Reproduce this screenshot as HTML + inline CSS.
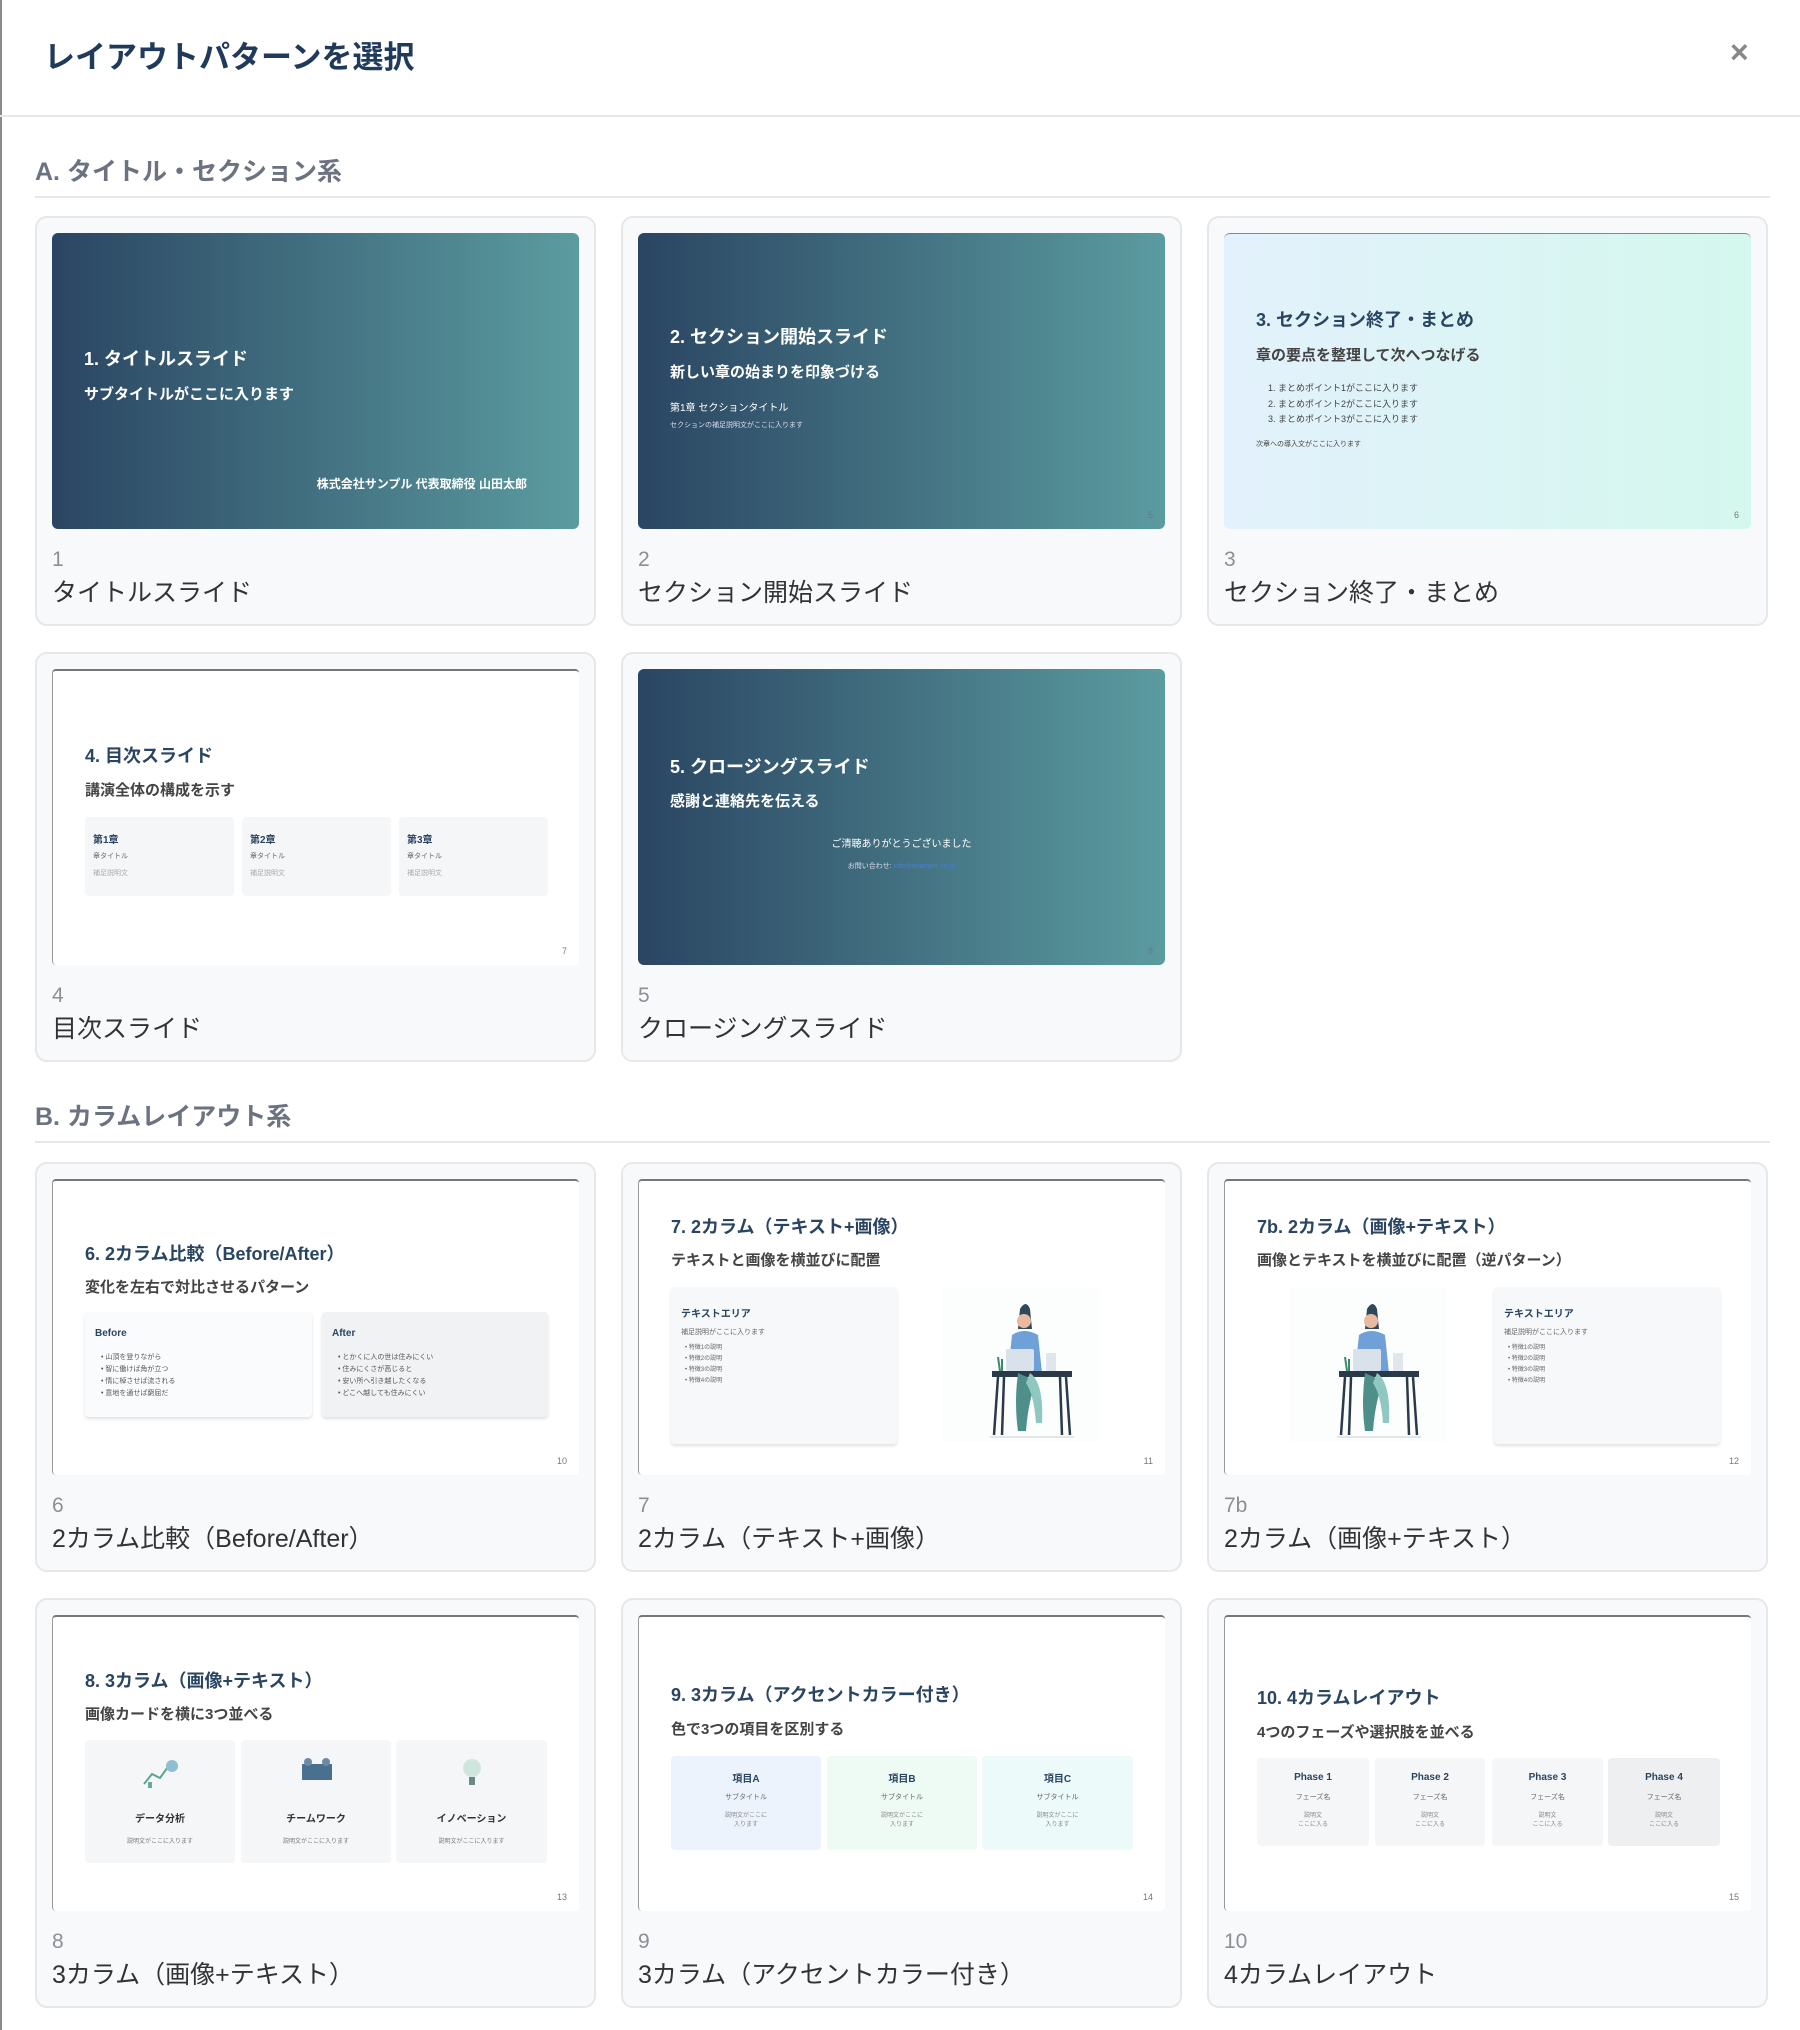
<!DOCTYPE html>
<html><head><meta charset="utf-8"><style>
*{box-sizing:border-box;margin:0;padding:0}
body{width:1800px;height:2030px;background:#fff;font-family:"Liberation Sans","Noto Sans CJK JP",sans-serif;position:relative;overflow:hidden}
.edge{position:absolute;left:0;top:0;width:2px;height:2030px;background:#8a8a8a}
.hdr{position:absolute;left:0;top:0;width:1800px;height:117px;border-bottom:2px solid #e5e7eb}
.hdr h1{position:absolute;left:44px;top:32px;font-size:31px;font-weight:700;color:#1f3a5a}
.x{position:absolute;left:1730px;top:34px;font-size:32px;color:#888;font-weight:700}
.sec{position:absolute;left:35px;width:1735px;font-size:25px;font-weight:700;color:#6b7280;border-bottom:2px solid #e5e7eb;height:46px}
.card{position:absolute;width:561px;height:410px;background:#f8f9fb;border:2px solid #e5e7eb;border-radius:12px}
.th{position:absolute;left:15px;top:15px;width:527px;height:296px;border-radius:6px;overflow:hidden;background:#fff}
.dark{background:linear-gradient(90deg,#2a4562,#5b9ca0)}
.white{border-top:2px solid #777;border-left:1px solid #999;border-radius:4px}
.num{position:absolute;left:15px;top:330px;font-size:21px;color:#8b8f96}
.nm{position:absolute;left:15px;top:355px;font-size:25px;color:#333}
.a{position:absolute;white-space:nowrap}
.t{font-weight:700;font-size:18px}
.s{font-weight:700;font-size:15px}
.pg{position:absolute;right:12px;bottom:9px;font-size:9px;color:#777}
.box{position:absolute;background:#f5f6f8;border-radius:4px}
.sh{box-shadow:0 2px 3px rgba(0,0,0,.12)}
.sm{font-size:7px;color:#666}
</style></head><body>
<div class="edge"></div>
<div class="hdr"><h1>レイアウトパターンを選択</h1><div class="x">×</div></div>

<div class="sec" style="top:152px">A. タイトル・セクション系</div>

<div class="card" style="left:35px;top:216px"><div class="th dark">
<div class="a t" style="left:32px;top:112px;color:#fff">1. タイトルスライド</div>
<div class="a s" style="left:32px;top:150px;color:#fff">サブタイトルがここに入ります</div>
<div class="a" style="right:52px;top:242px;color:#fff;font-size:12px;font-weight:700">株式会社サンプル 代表取締役 山田太郎</div>
</div><div class="num">1</div><div class="nm">タイトルスライド</div></div>

<div class="card" style="left:621px;top:216px"><div class="th dark">
<div class="a t" style="left:32px;top:90px;color:#fff">2. セクション開始スライド</div>
<div class="a s" style="left:32px;top:128px;color:#fff">新しい章の始まりを印象づける</div>
<div class="a" style="left:32px;top:166px;color:#fff;font-size:10px">第1章 セクションタイトル</div>
<div class="a" style="left:32px;top:187px;color:#dde;font-size:7px">セクションの補足説明文がここに入ります</div>
<div class="pg" style="color:#678">5</div>
</div><div class="num">2</div><div class="nm">セクション開始スライド</div></div>

<div class="card" style="left:1207px;top:216px"><div class="th" style="background:linear-gradient(90deg,#e3f1fc,#d4f7ee);border-top:1px solid #888">
<div class="a t" style="left:32px;top:72px;color:#2a4562">3. セクション終了・まとめ</div>
<div class="a s" style="left:32px;top:110px;color:#444">章の要点を整理して次へつなげる</div>
<div class="a" style="left:44px;top:147px;color:#444;font-size:9px;line-height:15.5px">1. まとめポイント1がここに入ります<br>2. まとめポイント2がここに入ります<br>3. まとめポイント3がここに入ります</div>
<div class="a sm" style="left:32px;top:205px;color:#444">次章への導入文がここに入ります</div>
<div class="pg">6</div>
</div><div class="num">3</div><div class="nm">セクション終了・まとめ</div></div>

<div class="card" style="left:35px;top:652px"><div class="th white">
<div class="a t" style="left:32px;top:71px;color:#2a4562">4. 目次スライド</div>
<div class="a s" style="left:32px;top:108px;color:#444">講演全体の構成を示す</div>
<div class="box" style="left:32px;top:146px;width:149px;height:79px"><div class="a" style="left:8px;top:14px;font-size:10px;font-weight:700;color:#2a4562">第1章</div><div class="a sm" style="left:8px;top:34px">章タイトル</div><div class="a sm" style="left:8px;top:51px;color:#aaa">補足説明文</div></div>
<div class="box" style="left:189px;top:146px;width:149px;height:79px"><div class="a" style="left:8px;top:14px;font-size:10px;font-weight:700;color:#2a4562">第2章</div><div class="a sm" style="left:8px;top:34px">章タイトル</div><div class="a sm" style="left:8px;top:51px;color:#aaa">補足説明文</div></div>
<div class="box" style="left:346px;top:146px;width:149px;height:79px"><div class="a" style="left:8px;top:14px;font-size:10px;font-weight:700;color:#2a4562">第3章</div><div class="a sm" style="left:8px;top:34px">章タイトル</div><div class="a sm" style="left:8px;top:51px;color:#aaa">補足説明文</div></div>
<div class="pg">7</div>
</div><div class="num">4</div><div class="nm">目次スライド</div></div>

<div class="card" style="left:621px;top:652px"><div class="th dark">
<div class="a t" style="left:32px;top:84px;color:#fff">5. クロージングスライド</div>
<div class="a s" style="left:32px;top:121px;color:#fff">感謝と連絡先を伝える</div>
<div class="a" style="left:0;width:527px;text-align:center;top:166px;color:#fff;font-size:10px">ご清聴ありがとうございました</div>
<div class="a" style="left:0;width:527px;text-align:center;top:192px;color:#dde;font-size:7px">お問い合わせ: <span style="color:#4a7fd0">info@example.co.jp</span></div>
<div class="pg" style="color:#678">8</div>
</div><div class="num">5</div><div class="nm">クロージングスライド</div></div>

<div class="sec" style="top:1097px">B. カラムレイアウト系</div>

<div class="card" style="left:35px;top:1162px"><div class="th white">
<div class="a t" style="left:32px;top:59px;color:#2a4562">6. 2カラム比較（Before/After）</div>
<div class="a s" style="left:32px;top:95px;color:#444">変化を左右で対比させるパターン</div>
<div class="box sh" style="left:32px;top:131px;width:227px;height:105px;background:#fafbfc"><div class="a" style="left:10px;top:16px;font-size:10px;font-weight:700;color:#2a4562">Before</div><div class="a" style="left:16px;top:40px;font-size:7px;color:#555;line-height:12px">• 山頂を登りながら<br>• 智に働けば角が立つ<br>• 情に棹させば流される<br>• 意地を通せば窮屈だ</div></div>
<div class="box sh" style="left:269px;top:131px;width:226px;height:105px;background:#f1f2f4"><div class="a" style="left:10px;top:16px;font-size:10px;font-weight:700;color:#2a4562">After</div><div class="a" style="left:16px;top:40px;font-size:7px;color:#555;line-height:12px">• とかくに人の世は住みにくい<br>• 住みにくさが高じると<br>• 安い所へ引き越したくなる<br>• どこへ越しても住みにくい</div></div>
<div class="pg">10</div>
</div><div class="num">6</div><div class="nm">2カラム比較（Before/After）</div></div>

<svg width="0" height="0" style="position:absolute"><defs><g id="person">
<rect x="0" y="0" width="160" height="155" fill="#fcfdfd"/>
<path d="M78 22 q6-10 10 0 l2 20 -14 0z" fill="#2e4a5a"/>
<circle cx="82" cy="34" r="7" fill="#e9b9a0"/>
<path d="M70 48 q12-8 26 0 l4 38 -34 0z" fill="#6fa0d8"/>
<rect x="64" y="62" width="28" height="22" rx="2" fill="#d9e2ea"/>
<rect x="50" y="84" width="80" height="6" fill="#2a3a4a"/>
<path d="M56 90 l-4 58 M124 90 l4 58 M62 90 l-2 58 M118 90 l2 58" stroke="#2a3a4a" stroke-width="2.5"/>
<path d="M76 86 q-4 30 0 58 l8 0 q2-28 10-50z" fill="#4f8f8a"/>
<path d="M88 86 q14 10 12 50 l-6 0 q-2-28-10-40z" fill="#8fc8c0"/>
<path d="M56 70 l2 14 M60 72 l0 12" stroke="#3b8a6a" stroke-width="2"/>
<rect x="104" y="66" width="10" height="18" fill="#dfe6ec"/>
<line x1="48" y1="150" x2="132" y2="150" stroke="#c8d0d8"/>
</g></defs></svg>

<div class="card" style="left:621px;top:1162px"><div class="th white">
<div class="a t" style="left:32px;top:32px;color:#2a4562">7. 2カラム（テキスト+画像）</div>
<div class="a s" style="left:32px;top:68px;color:#444">テキストと画像を横並びに配置</div>
<div class="box sh" style="left:32px;top:106px;width:226px;height:157px;background:#f7f8fa"><div class="a" style="left:10px;top:18px;font-size:10px;font-weight:700;color:#2a4562">テキストエリア</div><div class="a sm" style="left:10px;top:40px">補足説明がここに入ります</div><div class="a" style="left:14px;top:56px;font-size:6px;color:#666;line-height:11px">• 特徴1の説明<br>• 特徴2の説明<br>• 特徴3の説明<br>• 特徴4の説明</div></div>
<svg class="a" style="left:303px;top:106px" width="158" height="157"><use href="#person"/></svg>
<div class="pg">11</div>
</div><div class="num">7</div><div class="nm">2カラム（テキスト+画像）</div></div>

<div class="card" style="left:1207px;top:1162px"><div class="th white">
<div class="a t" style="left:32px;top:32px;color:#2a4562">7b. 2カラム（画像+テキスト）</div>
<div class="a s" style="left:32px;top:68px;color:#444">画像とテキストを横並びに配置（逆パターン）</div>
<svg class="a" style="left:64px;top:106px" width="158" height="157"><use href="#person"/></svg>
<div class="box sh" style="left:269px;top:106px;width:226px;height:157px;background:#f7f8fa"><div class="a" style="left:10px;top:18px;font-size:10px;font-weight:700;color:#2a4562">テキストエリア</div><div class="a sm" style="left:10px;top:40px">補足説明がここに入ります</div><div class="a" style="left:14px;top:56px;font-size:6px;color:#666;line-height:11px">• 特徴1の説明<br>• 特徴2の説明<br>• 特徴3の説明<br>• 特徴4の説明</div></div>
<div class="pg">12</div>
</div><div class="num">7b</div><div class="nm">2カラム（画像+テキスト）</div></div>

<div class="card" style="left:35px;top:1598px"><div class="th white">
<div class="a t" style="left:32px;top:50px;color:#2a4562">8. 3カラム（画像+テキスト）</div>
<div class="a s" style="left:32px;top:86px;color:#444">画像カードを横に3つ並べる</div>
<div class="box" style="left:32px;top:123px;width:150px;height:123px"><svg class="a" style="left:55px;top:14px" width="42" height="36"><path d="M4 30 l8-10 8 4 10-14" stroke="#5aa88a" fill="none" stroke-width="2"/><circle cx="32" cy="12" r="6" fill="#8fbfd0"/><rect x="8" y="28" width="4" height="6" fill="#6a9"/></svg><div class="a" style="left:0;width:150px;text-align:center;top:70px;font-size:10px;font-weight:700;color:#333">データ分析</div><div class="a" style="left:0;width:150px;text-align:center;top:96px;font-size:6px;color:#777">説明文がここに入ります</div></div>
<div class="box" style="left:188px;top:123px;width:150px;height:123px"><svg class="a" style="left:55px;top:14px" width="42" height="36"><rect x="6" y="10" width="30" height="16" fill="#4a7090"/><circle cx="12" cy="8" r="4" fill="#6a8aa8"/><circle cx="30" cy="8" r="4" fill="#6a8aa8"/></svg><div class="a" style="left:0;width:150px;text-align:center;top:70px;font-size:10px;font-weight:700;color:#333">チームワーク</div><div class="a" style="left:0;width:150px;text-align:center;top:96px;font-size:6px;color:#777">説明文がここに入ります</div></div>
<div class="box" style="left:343px;top:123px;width:151px;height:123px"><svg class="a" style="left:55px;top:14px" width="42" height="36"><circle cx="21" cy="14" r="9" fill="#cfe6de"/><rect x="18" y="23" width="6" height="8" fill="#6a8a8a"/></svg><div class="a" style="left:0;width:151px;text-align:center;top:70px;font-size:10px;font-weight:700;color:#333">イノベーション</div><div class="a" style="left:0;width:151px;text-align:center;top:96px;font-size:6px;color:#777">説明文がここに入ります</div></div>
<div class="pg">13</div>
</div><div class="num">8</div><div class="nm">3カラム（画像+テキスト）</div></div>

<div class="card" style="left:621px;top:1598px"><div class="th white">
<div class="a t" style="left:32px;top:64px;color:#2a4562">9. 3カラム（アクセントカラー付き）</div>
<div class="a s" style="left:32px;top:101px;color:#444">色で3つの項目を区別する</div>
<div class="box" style="left:32px;top:139px;width:150px;height:94px;background:#edf3fc"><div class="a" style="left:0;width:150px;text-align:center;top:14px;font-size:10px;font-weight:700;color:#2a4562">項目A</div><div class="a sm" style="left:0;width:150px;text-align:center;top:36px">サブタイトル</div><div class="a" style="left:0;width:150px;text-align:center;top:54px;font-size:6px;color:#888">説明文がここに<br>入ります</div></div>
<div class="box" style="left:188px;top:139px;width:150px;height:94px;background:#eefaf4"><div class="a" style="left:0;width:150px;text-align:center;top:14px;font-size:10px;font-weight:700;color:#2a4562">項目B</div><div class="a sm" style="left:0;width:150px;text-align:center;top:36px">サブタイトル</div><div class="a" style="left:0;width:150px;text-align:center;top:54px;font-size:6px;color:#888">説明文がここに<br>入ります</div></div>
<div class="box" style="left:343px;top:139px;width:151px;height:94px;background:#edfafa"><div class="a" style="left:0;width:151px;text-align:center;top:14px;font-size:10px;font-weight:700;color:#2a4562">項目C</div><div class="a sm" style="left:0;width:151px;text-align:center;top:36px">サブタイトル</div><div class="a" style="left:0;width:151px;text-align:center;top:54px;font-size:6px;color:#888">説明文がここに<br>入ります</div></div>
<div class="pg">14</div>
</div><div class="num">9</div><div class="nm">3カラム（アクセントカラー付き）</div></div>

<div class="card" style="left:1207px;top:1598px"><div class="th white">
<div class="a t" style="left:32px;top:67px;color:#2a4562">10. 4カラムレイアウト</div>
<div class="a s" style="left:32px;top:104px;color:#444">4つのフェーズや選択肢を並べる</div>
<div class="box" style="left:32px;top:141px;width:112px;height:88px"><div class="a" style="left:0;width:112px;text-align:center;top:14px;font-size:10px;font-weight:700;color:#2a4562">Phase 1</div><div class="a sm" style="left:0;width:112px;text-align:center;top:34px">フェーズ名</div><div class="a" style="left:0;width:112px;text-align:center;top:52px;font-size:6px;color:#888">説明文<br>ここに入る</div></div>
<div class="box" style="left:150px;top:141px;width:110px;height:88px"><div class="a" style="left:0;width:110px;text-align:center;top:14px;font-size:10px;font-weight:700;color:#2a4562">Phase 2</div><div class="a sm" style="left:0;width:110px;text-align:center;top:34px">フェーズ名</div><div class="a" style="left:0;width:110px;text-align:center;top:52px;font-size:6px;color:#888">説明文<br>ここに入る</div></div>
<div class="box" style="left:267px;top:141px;width:111px;height:88px"><div class="a" style="left:0;width:111px;text-align:center;top:14px;font-size:10px;font-weight:700;color:#2a4562">Phase 3</div><div class="a sm" style="left:0;width:111px;text-align:center;top:34px">フェーズ名</div><div class="a" style="left:0;width:111px;text-align:center;top:52px;font-size:6px;color:#888">説明文<br>ここに入る</div></div>
<div class="box" style="left:383px;top:141px;width:112px;height:88px;background:#eeeff1"><div class="a" style="left:0;width:112px;text-align:center;top:14px;font-size:10px;font-weight:700;color:#2a4562">Phase 4</div><div class="a sm" style="left:0;width:112px;text-align:center;top:34px">フェーズ名</div><div class="a" style="left:0;width:112px;text-align:center;top:52px;font-size:6px;color:#888">説明文<br>ここに入る</div></div>
<div class="pg">15</div>
</div><div class="num">10</div><div class="nm">4カラムレイアウト</div></div>

</body></html>
